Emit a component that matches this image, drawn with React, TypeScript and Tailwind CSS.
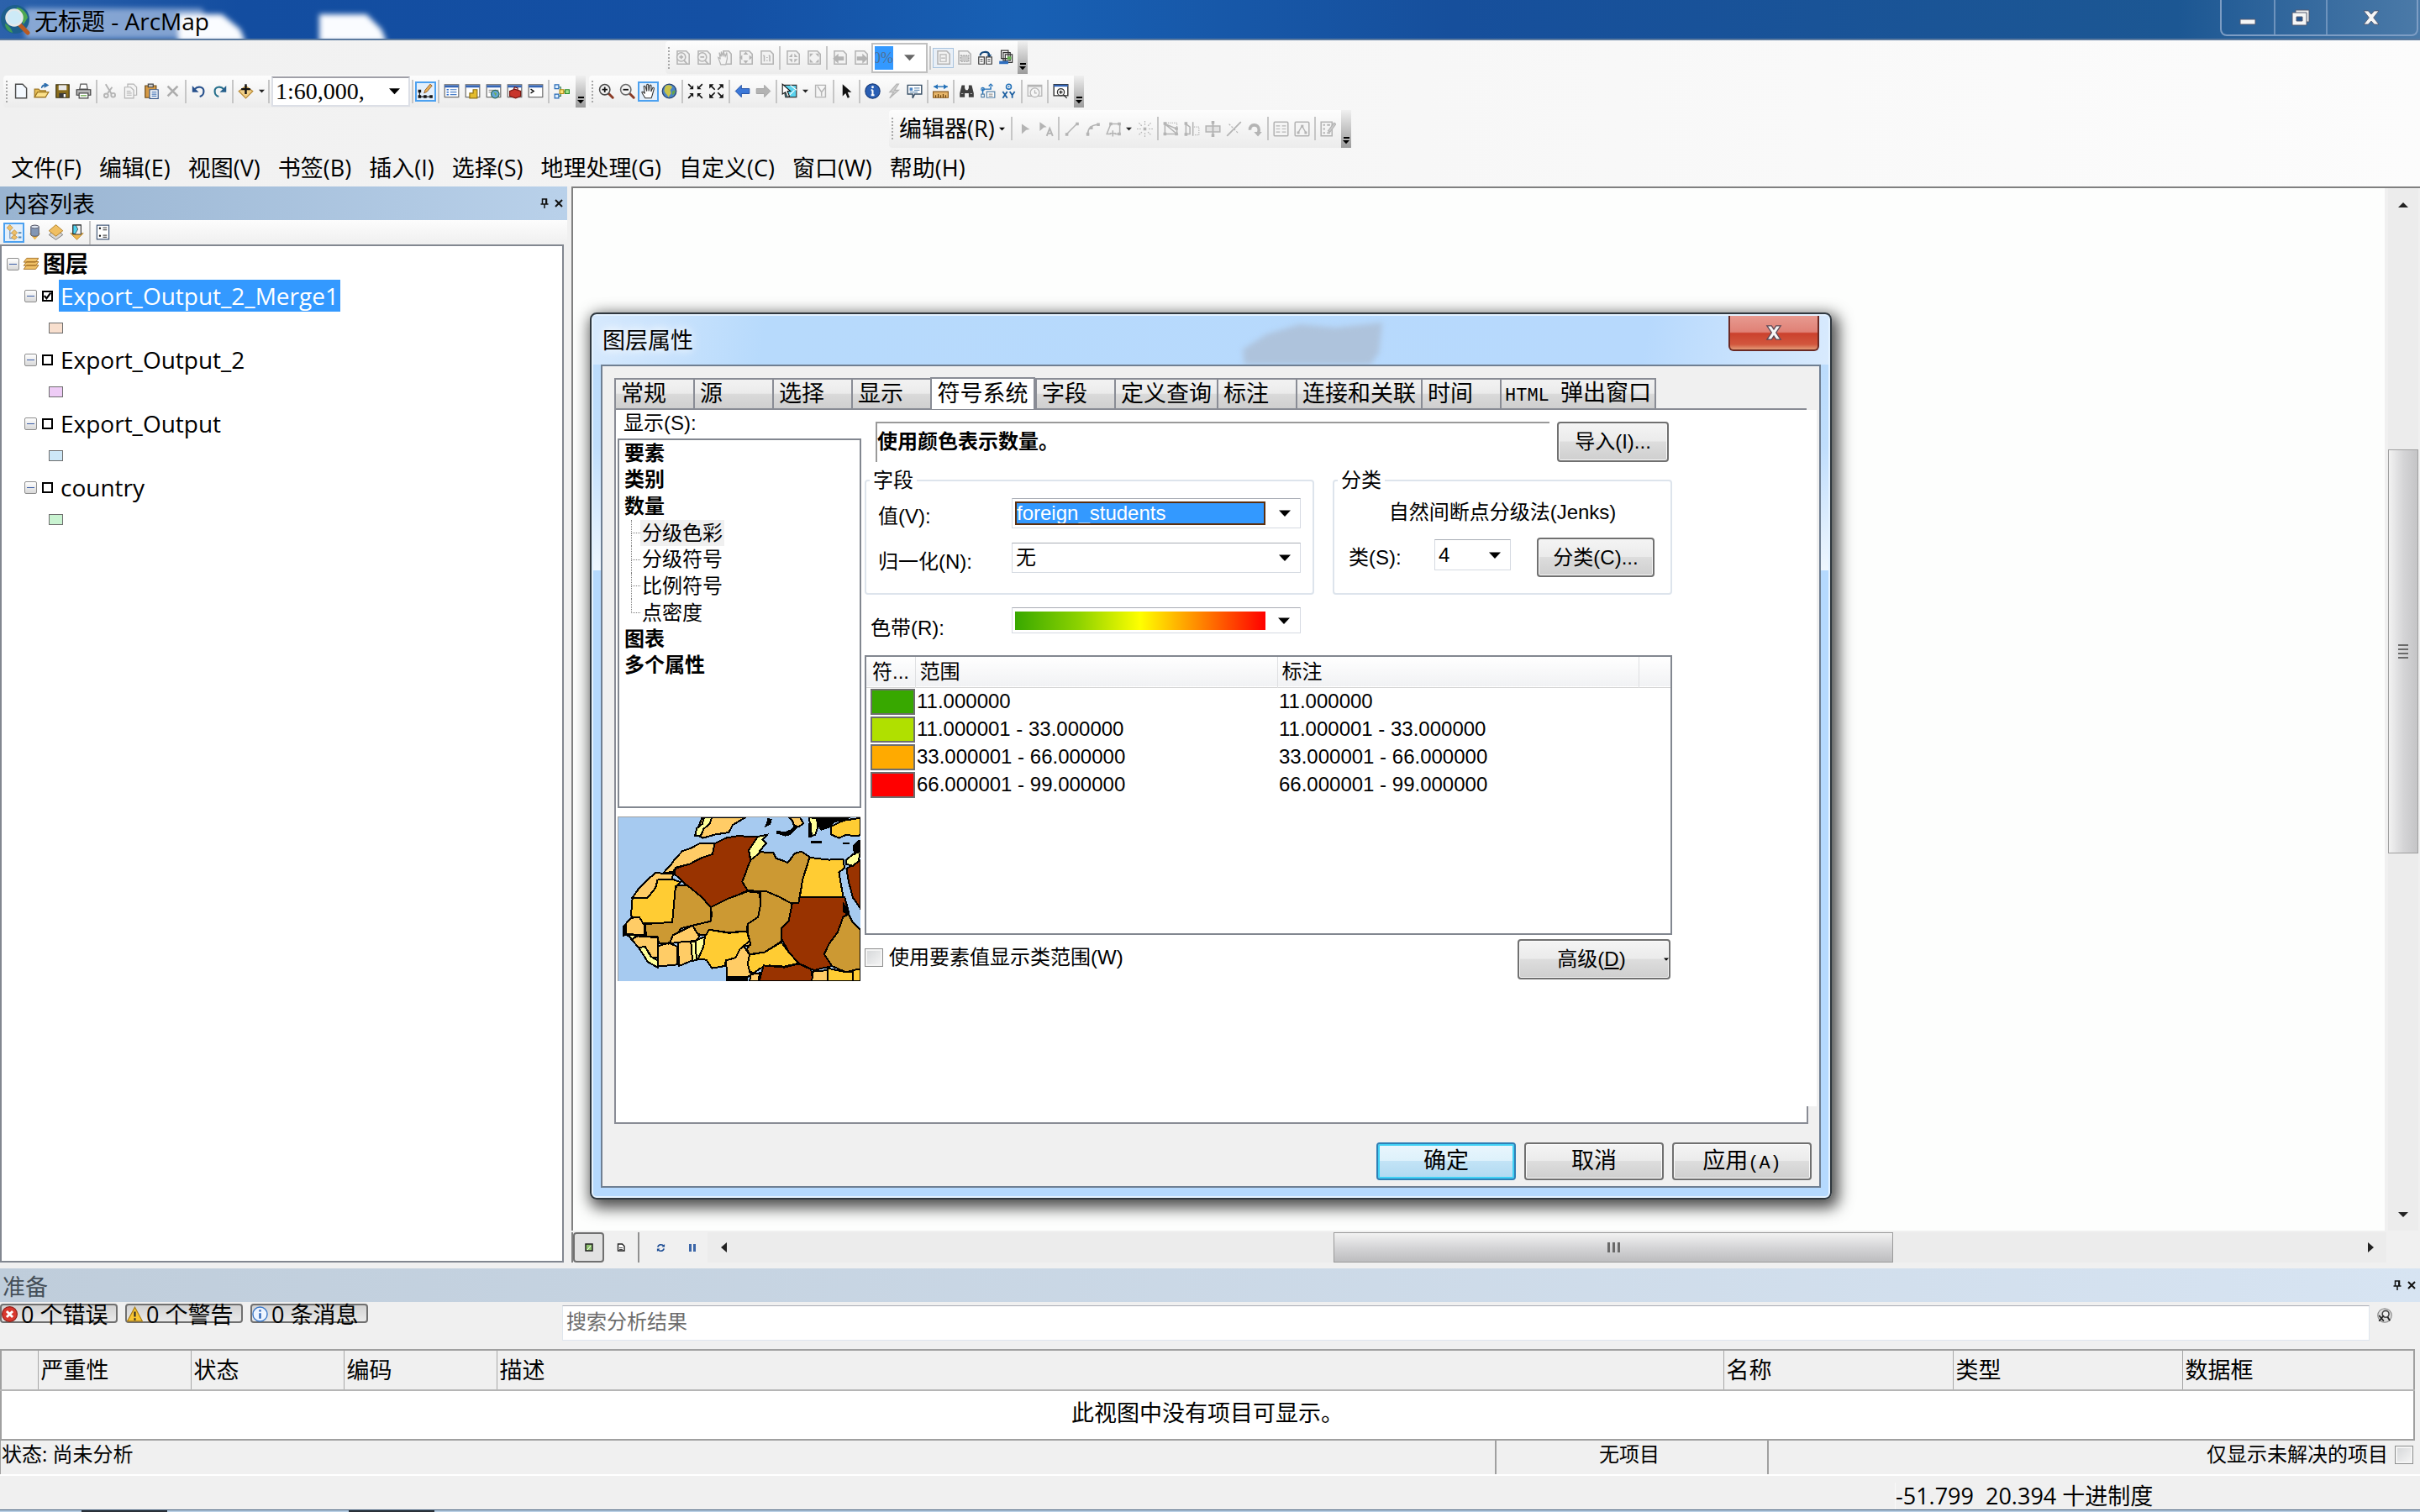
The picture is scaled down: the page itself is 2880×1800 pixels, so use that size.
import React from "react";

type Kids = { children?: React.ReactNode };

const UI = "font-['Open_Sans','Noto_Sans_CJK_SC',sans-serif]";
const SIM = "font-['Liberation_Sans','Noto_Sans_CJK_SC',sans-serif]";

/* ---------- icons (16 unit grid) ---------- */
const G = "#b4b4b4";

function Svg({ children, size = 20 }: Kids & { size?: number }) {
  return (
    <svg width={size} height={size} viewBox="0 0 16 16" fill="none" aria-hidden="true">
      {children}
    </svg>
  );
}

const lens = (c: string, handle: string) => (
  <>
    <path d="M10.5 10.5l4 4" stroke={handle} strokeWidth="2.4" strokeLinecap="round" />
    <circle cx="6.5" cy="6.5" r="5.2" fill="#f4f4f4" stroke={c} strokeWidth="1.3" />
  </>
);
const pageOutline = <path d="M2.5 1.5h9l3 3v10h-12z" fill="#f2f2f2" stroke={G} strokeWidth="1.3" />;
const windowFrame = (
  <>
    <rect x="1" y="1.5" width="14" height="12.5" fill="#fff" stroke="#6b6b6b" />
    <path d="M1 2h14v2.4H1z" fill="#3465b5" />
  </>
);

const icons: Record<string, React.ReactNode> = {
  newDoc: <path d="M3 1h7l4 4v10H3z" fill="#f4f9ff" stroke="#4a4a4a" strokeWidth="1.2" />,
  open: (
    <>
      <path d="M1 14V6h4l1.500 1.500H12V14z" fill="#e8bf55" stroke="#9c7520" />
      <path d="M1 14l3-5h11l-3 5z" fill="#fbe08a" stroke="#9c7520" />
      <path d="M8 5c0-3 2-3.500 4-3.500M11 0l3.500 2L11 4z" stroke="#2f6fae" fill="#2f6fae" />
    </>
  ),
  save: (
    <>
      <path d="M1.500 1.500h13v13h-13z" fill="#8a6d1c" stroke="#3d3312" />
      <path d="M4 2h8v5H4z" fill="#e9e9e9" />
      <path d="M4.500 10h7v4.500h-7z" fill="#3a3a3a" />
      <path d="M9 11h2v3H9z" fill="#fff" />
    </>
  ),
  print: (
    <>
      <path d="M5 1h6l1 5H4z" fill="#fff" stroke="#555" />
      <path d="M1 6.500h14V12H1z" fill="#b9b9b9" stroke="#3a3a3a" />
      <path d="M3.500 10h9v5h-9z" fill="#fff" stroke="#444" />
      <path d="M5 12.500h6" stroke="#5fa83c" />
    </>
  ),
  cut: (
    <g stroke={G} strokeWidth="1.6">
      <path d="M4 1l6 10M10.500 4L6 10" />
      <circle cx="4.500" cy="12.500" r="2" />
      <circle cx="11.500" cy="12" r="2" />
    </g>
  ),
  copy: (
    <g fill="#f4f4f4" stroke={G}>
      <path d="M5 1h6l3 3v8H5z" />
      <path d="M2 4h6l3 3v8H2zM4 8h4M4 10h5M4 12h5" />
    </g>
  ),
  paste: (
    <>
      <path d="M1.500 2.500h11v12h-11z" fill="#d69a45" stroke="#6b4a1a" />
      <path d="M4.500 1h5v3h-5z" fill="#ccc" stroke="#444" />
      <path d="M6 6.500h8.500v9H6z" fill="#fff" stroke="#3a5a8c" />
      <path d="M8 9h5M8 11h5M8 13h5" stroke="#4a78b8" />
    </>
  ),
  del: <path d="M3 3l10 10M13 3L3 13" stroke="#adadad" strokeWidth="2.2" />,
  undo: (
    <>
      <path d="M4 6c3-3.500 9-2.500 9 2 0 3-2 5-4 5.500" stroke="#27508c" strokeWidth="1.8" />
      <path d="M1.500 2.500v6.500h6.500z" fill="#27508c" />
    </>
  ),
  redo: (
    <>
      <path d="M12 6c-3-3.500-9-2.500-9 2 0 3 2 5 4 5.500" stroke="#27708c" strokeWidth="1.8" />
      <path d="M14.500 2.500v6.500H8z" fill="#27608c" />
    </>
  ),
  addData: (
    <>
      <path d="M8 3l7 5-7 7-7-7z" fill="#f2cf86" stroke="#b98a35" />
      <path d="M8 1v10M3.500 6h9" stroke="#111" strokeWidth="2" />
    </>
  ),
  editorTb: (
    <>
      <path d="M2 13.500h12M2 13V8" stroke="#222" />
      <path d="M.5 6.500h3v3h-3zM.5 12h3v3h-3zM6 12h3v3H6zM12 12h3v3h-3z" fill="#111" />
      <path d="M6.500 10l1-3 5-6 2 1.500-5 6z" fill="#e9b054" stroke="#87501a" strokeWidth=".7" />
    </>
  ),
  tocWin: (
    <>
      {windowFrame}
      <path d="M3 6.500h2M3 9h2M3 11.500h2" stroke="#2f6fd0" strokeWidth="1.300" />
      <path d="M6.500 6.500H13M6.500 9H13M6.500 11.500H13" stroke="#4a7fc8" />
    </>
  ),
  catalog: (
    <>
      {windowFrame}
      <path d="M5 10h3.500V6.500h4V15H5z" fill="#e4bc2c" stroke="#927310" />
    </>
  ),
  search: (
    <>
      {windowFrame}
      <path d="M3 7h10M3 9h6" stroke="#999" />
      <circle cx="9.500" cy="11" r="4" fill="#63a5d8" stroke="#2f6b51" />
      <path d="M8 9l3 1-1 3z" fill="#6fb04a" />
    </>
  ),
  toolbox: (
    <>
      {windowFrame}
      <path d="M3 8l5-2 6 2v5l-5 2-6-2z" fill="#c8352b" stroke="#7a1711" />
      <path d="M7 6l1-2 3 1v2" stroke="#7a1711" />
    </>
  ),
  python: (
    <>
      {windowFrame}
      <path d="M3 6l3 2-3 2" stroke="#111" strokeWidth="1.200" />
    </>
  ),
  model: (
    <>
      <path d="M4 4h3v9H4M7 8.500h5" stroke="#2f7c50" />
      <path d="M1 1.500h4v4H1zM1 11h4v4H1z" fill="#d9ecff" stroke="#2668b4" />
      <path d="M6 6.500h4v4H6z" fill="#ffe27a" stroke="#b08a10" />
      <path d="M11.500 6.500h4v4h-4z" fill="#a5e38c" stroke="#2b8a2b" />
    </>
  ),
  zoomIn: (
    <>
      {lens("#4a4a4a", "#8a3a25")}
      <path d="M6.500 3.800v5.400M3.800 6.500h5.400" stroke="#111" strokeWidth="1.500" />
    </>
  ),
  zoomOut: (
    <>
      {lens("#6a6a6a", "#8a3a25")}
      <path d="M3.800 6.500h5.400" stroke="#111" strokeWidth="1.500" />
    </>
  ),
  hand: (
    <path
      d="M5 15c-1-2-3-4-3.500-6 1-1 2 0 3 1.500L3.500 3c1-.8 1.500 0 1.800 1L6.500 8V1.500c1-1 1.700 0 1.700 1L8.500 8l1-6c1.200-.7 1.600.2 1.500 1.300L10.800 8.500l1.700-4c1.200-.5 1.500.5 1.200 1.500L12 12l-1 3z"
      fill="#fff"
      stroke="#333"
      strokeWidth=".9"
    />
  ),
  globe: (
    <>
      <circle cx="8" cy="8" r="7" fill="#4a84c4" stroke="#24406e" />
      <path d="M4 3c3-2 6-1 7 1l-2 3 1 3-3 4c-1-3-4-4-4-7z" fill="#c9c34a" />
      <path d="M11 8l3-1c0 3-1 4-3 5z" fill="#63a548" />
    </>
  ),
  fixIn: (
    <g stroke="#111" strokeWidth="1.400" fill="#111">
      <path d="M1 1l3 3M15 1l-3 3M1 15l3-3M15 15l-3-3" />
      <path d="M6 2v4H2zM10 2v4h4zM6 14v-4H2zM10 14v-4h4z" strokeWidth="0" />
    </g>
  ),
  fixOut: (
    <g stroke="#111" strokeWidth="1.400" fill="#111">
      <path d="M3 3l3.500 3.500M13 3L9.500 6.500M3 13l3.500-3.500M13 13L9.500 9.500" />
      <path d="M1 1h4.500L1 5.500zM15 1h-4.500L15 5.500zM1 15h4.500L1 10.500zM15 15h-4.500l4.500-4.500z" strokeWidth="0" />
    </g>
  ),
  back: <path d="M1 8l6-6v3.500h8v5H7V14z" fill="#3c78d8" stroke="#1f4ea3" strokeWidth=".8" />,
  fwd: <path d="M15 8L9 2v3.500H1v5h8V14z" fill="#b3b3b3" stroke="#a2a2a2" strokeWidth=".8" />,
  selFeat: (
    <>
      <path d="M2 2h13v12H4z" fill="#5ad3ee" stroke="#333" />
      <path d="M9 2l6 5M6 14l7-7" stroke="#fff" />
      <path d="M1 1v10l3-2 2 5 2-1-2-5h3z" fill="#fff" stroke="#111" strokeWidth=".9" />
    </>
  ),
  clearSel: <path d="M3 2h10v12H3zM5 3l4 6 4-5M9 9v4" fill="#f4f4f4" stroke={G} strokeWidth="1.200" />,
  pointer: <path d="M4 1v12l3-3 2 5 2-1-2-5h4z" fill="#111" />,
  identify: (
    <>
      <circle cx="8" cy="8" r="7.300" fill="#2a5fb4" stroke="#183c7c" />
      <path d="M8 7v5M6.500 7H8M6.500 12h3.200" stroke="#fff" strokeWidth="1.700" />
      <circle cx="8" cy="4" r="1.200" fill="#fff" />
    </>
  ),
  bolt: <path d="M11 1L4 9h4l-4 6 9-8H9l4-6z" fill="#d0d0d0" stroke={G} />,
  popup: (
    <>
      <path d="M1 2h14v9H8l-2 4v-4H1z" fill="#fff" stroke="#3a5168" strokeWidth="1.200" />
      <path d="M3 4.500h3v3H3z" fill="#4a84c4" />
      <path d="M7.500 5H13M7.500 7H13M3 9h8" stroke="#6d93b8" />
    </>
  ),
  measure: (
    <>
      <path d="M1 3.500h14" stroke="#2270b8" strokeWidth="1.200" />
      <path d="M5 1v5L1 3.500zM11 1v5l4-2.500z" fill="#2270b8" />
      <path d="M.5 8.500h15v6H.5z" fill="#e6b56a" stroke="#8a5a1c" />
      <path d="M3 14.500V12M5.500 14.500V11M8 14.500V12M10.500 14.500V11M13 14.500V12" stroke="#6b430e" />
    </>
  ),
  find: (
    <>
      <path d="M3 2h3v3l1 2h2l1-2V2h3l2 8v4h-5v-4H6v4H1v-4z" fill="#3f3f3f" />
      <path d="M2.500 10.500h2M11.500 10.500h2" stroke="#aaa" />
    </>
  ),
  route: (
    <>
      <path d="M3 14V6h8V3M9 3l2-2 2 2" stroke="#2270b8" strokeWidth="1.200" />
      <circle cx="3" cy="6" r="1.500" stroke="#2270b8" />
      <path d="M7 8.500h8v6H7zM1.500 11h3v3h-3z" fill="#fff" stroke="#5481a8" />
      <path d="M9 11h4M9 13h4" stroke="#999" />
    </>
  ),
  xy: (
    <>
      <circle cx="8" cy="3.500" r="2.500" stroke="#2270b8" strokeWidth="1.300" />
      <circle cx="8" cy="3.500" r=".8" fill="#2270b8" />
      <path d="M2 8.500l4.500 6.500M6.500 8.500L2 15M9 8.500l2.500 3.500L14 8.500M11.500 12v3" stroke="#1d5fa0" strokeWidth="1.500" />
    </>
  ),
  time: (
    <g stroke={G}>
      <path d="M1 2h14v11H1z" fill="#f1f1f1" />
      <path d="M1 3h14" strokeWidth="1.500" />
      <circle cx="8" cy="9.500" r="4.500" fill="#f6f6f6" />
      <path d="M8 7v3h2" />
    </g>
  ),
  viewer: (
    <>
      <path d="M1 1.500h14v11H1z" fill="#fff" stroke="#333" strokeWidth="1.200" />
      <path d="M1 2.500h14" stroke="#3465b5" strokeWidth="2" />
      <circle cx="8" cy="9" r="3.500" fill="#eee" stroke="#333" />
      <path d="M8 7.300v3.400M6.300 9h3.400M10.500 11.500l3.500 3.500" stroke="#222" />
    </>
  ),
  lZoomIn: (
    <>
      {pageOutline}
      <circle cx="6.500" cy="7.500" r="4.300" fill="#f0f0f0" stroke={G} strokeWidth="1.300" />
      <path d="M6.500 5.500v4M4.500 7.500h4M9.500 11l3 3.500" stroke={G} strokeWidth="1.500" />
    </>
  ),
  lZoomOut: (
    <>
      {pageOutline}
      <circle cx="6.500" cy="7.500" r="4.300" fill="#f0f0f0" stroke={G} strokeWidth="1.300" />
      <path d="M4.500 7.500h4M9.500 11l3 3.500" stroke={G} strokeWidth="1.500" />
    </>
  ),
  lPan: (
    <>
      <path d="M6 1.500h6l2.500 3v10H8" fill="#f2f2f2" stroke={G} strokeWidth="1.300" />
      <path d="M4 15L1.500 8l2 1-1-6 2 4V2l2 5V1.500L8.500 7l1.500-4 .5 6L9 15z" fill="#f4f4f4" stroke={G} />
    </>
  ),
  lFull: (
    <>
      {pageOutline}
      <path d="M8 2l2.500 3h-5zM8 14l2.500-3h-5zM1.500 8l3-2.500v5zM14.500 8l-3-2.500v5z" fill={G} />
    </>
  ),
  l11: (
    <>
      {pageOutline}
      <path d="M5.500 6v6M4.500 6.500l1-.8M11 6v6M10 6.500l1-.8M8.300 7.500v1M8.300 10.500v1" stroke={G} strokeWidth="1.300" />
    </>
  ),
  lFixIn: (
    <>
      {pageOutline}
      <path d="M7.500 4v3.500H4zM9.500 4v3.500H13zM7.500 13V9.500H4zM9.500 13V9.500H13z" fill={G} />
    </>
  ),
  lFixOut: (
    <>
      {pageOutline}
      <path d="M4 4h3.500L4 7.500zM13 4H9.500L13 7.500zM4 13h3.500L4 9.500zM13 13H9.500L13 9.500z" fill={G} />
    </>
  ),
  lBack: (
    <>
      {pageOutline}
      <path d="M1 9l5.500-5v3H12v4H6.500v3z" fill={G} />
    </>
  ),
  lFwd: (
    <>
      {pageOutline}
      <path d="M15 9L9.500 4v3H4v4h5.500v3z" fill={G} />
    </>
  ),
  draft: (
    <>
      {pageOutline}
      <path d="M5 5h6v7H5zM6 8.500h4" stroke={G} />
    </>
  ),
  focus: (
    <>
      {pageOutline}
      <path d="M4.500 6h8v6h-8z" fill="#ccc" stroke="#999" strokeDasharray="1.500 1" />
    </>
  ),
  swapPages: (
    <>
      <path d="M3 6c0-4 8-5 9-1" stroke="#174a7c" strokeWidth="1.800" />
      <path d="M9.500 5h5L12 8z" fill="#174a7c" />
      <path d="M1.500 7.500H7v7H1.500zM9 7.500h5.500v7H9z" fill="#fff" stroke="#333" />
      <path d="M3 10h2.500M3 12h2.500M10.500 10H13M10.500 12H13" stroke="#555" />
    </>
  ),
  ddp: (
    <>
      <path d="M3 1h7v8H3zM5 3h7v8H5zM7 5h7v8H7z" fill="#fff" stroke="#333" />
      <path d="M9 7h4v3H9z" fill="#5fae4a" />
      <path d="M1 11.500h9v3H1z" fill="#2f6fc0" />
    </>
  ),
  edPtr: <path d="M5 3l8 5.500-3.500.5L5 13z" fill={G} />,
  edPtrA: (
    <>
      <path d="M2 1l7 5-3 .5L2 10z" fill={G} />
      <path d="M9 15l3-7.500 3 7.500M10 12.500h4" stroke={G} strokeWidth="1.600" />
    </>
  ),
  line: (
    <>
      <path d="M3 13L13 3" stroke={G} strokeWidth="1.300" />
      <path d="M1.500 12h3v3h-3zM12 1.500h3v3h-3z" fill={G} />
    </>
  ),
  arc: (
    <>
      <path d="M3 13c0-6 4-9 10-9.500" stroke={G} strokeWidth="1.300" />
      <path d="M1.500 11.500h3V15h-3zM5 5.500h3v3H5zM12 2h3v3h-3z" fill={G} />
    </>
  ),
  trace: (
    <>
      <path d="M5 3h9v10H9M5 3L1 13h4M7 9.500v6M4 12.500h6" stroke={G} strokeWidth="1.300" />
      <path d="M3.500 1.500h3v3h-3zM12 1.500h3v3h-3zM12 11.500h3v3h-3z" fill={G} />
    </>
  ),
  point: (
    <>
      <path d="M6.500 6.500h3v3h-3z" fill={G} />
      <path d="M8 0v4M8 12v4M0 8h4M12 8h4M2 2l3 3M11 11l3 3M14 2l-3 3M5 11l-3 3" stroke={G} strokeDasharray="1.500 1" />
    </>
  ),
  vert: (
    <>
      <path d="M2 3v10h12zM2 3l12 5v5" stroke={G} strokeWidth="1.300" />
      <path d="M.5 1h3v3h-3zM.5 11.500h3v3h-3zM12 6h3v3h-3zM12 11.500h3v3h-3z" fill={G} />
      <path d="M3 2h11v5" stroke={G} strokeDasharray="1 1" />
    </>
  ),
  reshape: (
    <>
      <path d="M2 3v10M2 3l4 3v7H2M9 1v14" stroke={G} strokeWidth="1.300" />
      <path d="M.5 1h3v3h-3zM.5 12h3v3h-3z" fill={G} />
      <path d="M10 6h5v8h-5" stroke={G} strokeDasharray="1 1" />
    </>
  ),
  cutPoly: (
    <>
      <path d="M1 5h14v6H1z" fill="#e2e2e2" stroke={G} strokeWidth="1.300" />
      <path d="M8 1v14" stroke={G} strokeWidth="1.600" />
      <path d="M6.500 0h3v3h-3zM6.500 13h3v3h-3z" fill={G} />
    </>
  ),
  split: (
    <>
      <path d="M1 15L15 1" stroke={G} strokeWidth="1.500" />
      <path d="M3 3l10 10" stroke={G} strokeDasharray="2 1.500" />
    </>
  ),
  rotate: (
    <>
      <path d="M3 9c-1-6 9-7 9 0 0 1 0 2-1 3" stroke={G} strokeWidth="3" />
      <path d="M7 11h8l-4 4.500z" fill={G} />
    </>
  ),
  attrs: (
    <>
      <rect x="1" y="1" width="14" height="14" rx="1" fill="#f4f4f4" stroke={G} strokeWidth="1.300" />
      <path d="M3 5h4M3 8h4M3 11h4M9 5h4M9 8h4M9 11h4" stroke={G} />
    </>
  ),
  sketch: (
    <>
      <rect x="1" y="1" width="14" height="14" rx="1" fill="#f4f4f4" stroke={G} strokeWidth="1.300" />
      <path d="M4 12l4-7 4 7" stroke={G} strokeWidth="1.200" />
      <path d="M3 10.500h2.500V13H3zM7 4h2.500v2.500H7zM10.500 10.500H13V13h-2.500z" fill={G} />
    </>
  ),
  create: (
    <>
      <path d="M1 1h11v14H1z" fill="#f4f4f4" stroke={G} strokeWidth="1.300" />
      <path d="M3 4h2M3 8h2M3 12h2M7 4h3M7 12h3" stroke={G} strokeWidth="1.500" />
      <path d="M8 10l6-8 2 1-6 8z" fill="#ccc" stroke={G} />
    </>
  ),
  listDraw: (
    <>
      <path d="M4 5v9h3M4 9h3" stroke="#7a98bb" />
      <path d="M4 .500l3 3-3 3-3-3zM8.500 5.500l3 3-3 3-3-3zM8.500 10.500l3 2.500-3 2.500-3-2.500z" fill="#efc06a" stroke="#b9883a" strokeWidth=".6" />
      <path d="M12.500 8.500h3M12.500 13h3" stroke="#4f86b5" strokeWidth="1.600" />
    </>
  ),
  listSource: (
    <>
      <path d="M2.500 9h11L8 15.500z" fill="#efb84f" />
      <path d="M4 2.500c0-2 8-2 8 0v8c0 2-8 2-8 0z" fill="#8296b5" stroke="#445" strokeWidth=".7" />
      <ellipse cx="8" cy="2.500" rx="4" ry="1.500" fill="#dfe7f2" stroke="#445" strokeWidth=".6" />
    </>
  ),
  listVis: (
    <>
      <path d="M8 5l7 5.500-7 5-7-5z" fill="#d6d6d6" stroke="#777" strokeWidth=".8" />
      <path d="M8 .500l7 6-7 5.500-7-5.500z" fill="#f0bf62" stroke="#b07f28" strokeWidth=".8" />
    </>
  ),
  listSel: (
    <>
      <path d="M1.500 9h13L8 15.500z" fill="#efb84f" stroke="#b07f28" strokeWidth=".6" />
      <path d="M4 .800h8v9H4z" fill="#4fd0ee" stroke="#222" />
      <path d="M7 1l2 4-3 5h6V1z" fill="#f4f4f4" stroke="#222" strokeWidth=".6" />
    </>
  ),
  options: (
    <>
      <path d="M2 1h12v14H2z" fill="#fff" stroke="#445a7a" />
      <circle cx="5" cy="4" r="1" fill="#111" />
      <circle cx="5" cy="11.500" r="1" fill="#111" />
      <path d="M8 3.500h4M8 5.500h4M8 11h4M8 13h4" stroke="#555" />
    </>
  ),
};

function Arrow({ size = 14, color = "#000" }: { size?: number; color?: string }) {
  return (
    <svg width={size} height={size} viewBox="0 0 14 14" aria-hidden="true" className="pointer-events-none">
      <path d="M0 3.500h14L7 11z" fill={color} />
    </svg>
  );
}

/* ---------- toolbars ---------- */
function Tool({ name, on, faint }: { name: string; on?: boolean; faint?: boolean }) {
  return (
    <button
      type="button"
      aria-label={name}
      className={
        "flex h-6 w-[25px] shrink-0 items-center justify-center " +
        (on ? (faint ? "border border-[#a9c4de] bg-[#e8eff7]" : "border-2 border-[#4ca1f0] bg-[#e3effb]") : "")
      }
    >
      <Svg size={19}>{icons[name]}</Svg>
    </button>
  );
}
const Sep = () => <span className="mx-[2px] h-7 w-[2px] shrink-0 bg-[#c6c6c6]" />;

function Items({ list }: { list: string[] }) {
  return (
    <>
      {list.map((n, i) => {
        if (n === "|") return <Sep key={i} />;
        if (n === "v") return <span key={i} className="flex w-3 justify-center"><Arrow size={7} color="#222" /></span>;
        if (n.startsWith("*")) return <Tool key={i} name={n.slice(1)} on />;
        if (n.startsWith("~")) return <Tool key={i} name={n.slice(1)} on faint />;
        return <Tool key={i} name={n} />;
      })}
    </>
  );
}

function Bar({ children, className = "" }: Kids & { className?: string }) {
  return (
    <div className={"flex shrink-0 items-center rounded bg-linear-to-b from-[#fdfdfd] to-[#ececec] " + className}>
      <span className="mx-[3px] h-[26px] border-l-2 border-dotted border-[#a8a8a8]" />
      {children}
      <span className="ml-auto flex h-full w-3 flex-col items-center justify-end bg-linear-to-b from-[#f0f0f0] to-[#9c9c9c] pb-[3px]">
        <span className="h-[2px] w-[7px] bg-black" />
        <Arrow size={8} />
      </span>
    </div>
  );
}

/* ---------- shared controls ---------- */
const btnFace =
  "border-[#707070] bg-[linear-gradient(#f4f4f4,#ebebeb_48%,#dddddd_50%,#cfcfcf)] shadow-[inset_0_0_0_1px_#fafafa]";

function DropDown({
  id,
  value,
  className = "",
  selected = false,
}: {
  id: string;
  value: string;
  className?: string;
  selected?: boolean;
}) {
  return (
    <span className={"relative flex border border-[#d5dae2] border-t-[#a9adb5] bg-white " + className}>
      <select
        id={id}
        defaultValue={value}
        className={
          "h-auto w-full appearance-none text-2xl leading-6 outline-none " +
          (selected
            ? "my-[3px] mr-[41px] ml-[3px] border-2 border-[#5a2f10] bg-[#3399ff] text-white"
            : "pl-[4px]")
        }
      >
        <option>{value}</option>
      </select>
      <span className="pointer-events-none absolute inset-y-0 right-[11px] flex items-center">
        <Arrow />
      </span>
    </span>
  );
}

function PinClose() {
  return (
    <span className="flex items-center gap-[7px]">
      <button type="button" aria-label="自动隐藏">
        <svg width="10" height="12" viewBox="0 0 10 12" fill="none" stroke="#111" strokeWidth="1.500">
          <path d="M2.500 1h5v6h-5zM.500 7h9M5 7v5M6.800 1v6" />
        </svg>
      </button>
      <button type="button" aria-label="关闭">
        <svg width="10" height="10" viewBox="0 0 10 10" stroke="#111" strokeWidth="2">
          <path d="M1 1l8 8M9 1L1 9" />
        </svg>
      </button>
    </span>
  );
}

/* ---------- table of contents ---------- */
const layers = [
  { name: "Export_Output_2_Merge1", color: "bg-[#f8dfce]", on: true },
  { name: "Export_Output_2", color: "bg-[#eeccf6]", on: false },
  { name: "Export_Output", color: "bg-[#cde7f7]", on: false },
  { name: "country", color: "bg-[#c9f3d1]", on: false },
];

function Collapse() {
  return (
    <button
      type="button"
      aria-label="折叠"
      className="flex size-[15px] shrink-0 items-center justify-center rounded-[2px] border border-[#8e8e8e] bg-linear-to-b from-white to-[#d8d8d8]"
    >
      <span className="h-px w-[9px] bg-[#3c5ea8]" />
    </button>
  );
}

function Contents() {
  return (
    <aside className="flex w-[675px] shrink-0 flex-col bg-[#f0f0f0]">
      <header className="flex h-10 items-center justify-between bg-linear-to-r from-[#99b4d1] to-[#b9d1ea] pr-[5px] pl-[5px]">
        <h2 className="pt-[2px] text-[27px] leading-9">内容列表</h2>
        <PinClose />
      </header>
      <div className="flex h-[29px] items-center bg-linear-to-b from-[#fdfdfd] to-[#efefef] pl-1">
        <Items list={["*listDraw", "listSource", "listVis", "listSel", "|", "options"]} />
      </div>
      <div className="mr-1 flex-1 border-2 border-[#828790] bg-white pt-[2px]">
        <div className="flex h-[38px] items-center pl-[6px]">
          <Collapse />
          <span className="ml-1">
            <svg width="19" height="19" viewBox="0 0 16 16">
              <path d="M4 9h12l-3 4H1zM4 5.500h12l-3 4H1zM4 2h12l-3 4H1z" fill="#f0c168" stroke="#a8742a" strokeWidth=".8" />
            </svg>
          </span>
          <span className="ml-[5px] text-[27px] leading-9 font-bold">图层</span>
        </div>
        {layers.map((l) => (
          <div key={l.name}>
            <div className="flex h-[38px] items-center pl-[27px]">
              <Collapse />
              <label className="flex items-center">
                <span className="relative ml-[6px] flex">
                  <input
                    type="checkbox"
                    defaultChecked={l.on}
                    className="peer size-[13px] appearance-none border-2 border-black bg-white"
                  />
                  <svg viewBox="0 0 12 12" className="absolute inset-0 hidden size-[13px] peer-checked:block">
                    <path d="M2.500 5.500l2.500 3 4.500-6" stroke="#000" strokeWidth="2" fill="none" />
                  </svg>
                </span>
                <span className={"ml-[7px] px-[2px] text-[28px] leading-[38px] " + (l.on ? "bg-[#3399ff] text-white" : "")}>
                  {l.name}
                </span>
              </label>
            </div>
            <div className="flex h-[38px] items-center pl-14">
              <span className={"h-[13px] w-[17px] border border-[#6e6e6e] " + l.color} />
            </div>
          </div>
        ))}
      </div>
    </aside>
  );
}

/* ---------- map window with scroll bars ---------- */
function MapArea() {
  const cap = "flex shrink-0 items-center justify-center";
  return (
    <section className="ml-[5px] flex min-w-0 flex-1 flex-col border-t-2 border-[#808080]">
      <div className="flex flex-1">
        <div className="flex-1 border-l-2 border-[#808080] bg-[#fdfefd]" />
        <div className="ml-1 flex w-9 flex-col bg-[#ececec]">
          <button type="button" aria-label="向上滚动" className={cap + " h-[38px]"}>
            <svg width="12" height="7" viewBox="0 0 12 7"><path d="M0 7l6-6 6 6z" fill="#222" /></svg>
          </button>
          <div className="flex-[274]" />
          <div className="flex flex-[481] flex-col items-center justify-center gap-[3px] border border-[#a0a0a0] bg-linear-to-r from-[#f2f2f2] via-[#d5d5d7] to-[#c4c4c6]">
            {[0, 1, 2, 3].map((i) => <span key={i} className="h-[2px] w-3 bg-[#6a6a6a]" />)}
          </div>
          <div className="flex-[412]" />
          <button type="button" aria-label="向下滚动" className={cap + " h-[38px]"}>
            <svg width="12" height="7" viewBox="0 0 12 7"><path d="M0 0l6 6 6-6z" fill="#222" /></svg>
          </button>
        </div>
        <div className="w-[2px]" />
      </div>
      <div className="mt-[2px] mr-10 flex h-9 border-l-2 border-[#808080]">
        <button type="button" aria-label="数据视图" className={cap + " w-[37px] rounded border-2 border-[#707070] bg-[#e2e2e2]"}>
          <svg width="10" height="10" viewBox="0 0 10 10"><path d="M1 1h8v8H1z" fill="#8fc46e" stroke="#222" strokeWidth="1.500" /><path d="M3 8l4-5" stroke="#fff" /></svg>
        </button>
        <button type="button" aria-label="布局视图" className={cap + " w-10"}>
          <svg width="10" height="10" viewBox="0 0 10 10"><path d="M1.500 1h5L9 3.500V9H1.500z" fill="#fff" stroke="#222" strokeWidth="1.400" /><path d="M3 5.500h4M3 7.500h4" stroke="#444" /></svg>
        </button>
        <span className="h-full w-[2px] bg-[#909090]" />
        <button type="button" aria-label="刷新" className={cap + " ml-[5px] w-10"}>
          <svg width="11" height="11" viewBox="0 0 12 12" fill="none" stroke="#1c4c94" strokeWidth="1.800"><path d="M2 5c1-4 6-4 8-1M10 7c-1 4-6 4-8 1" /><path d="M11 1v4H7zM1 11V7h4z" fill="#1c4c94" strokeWidth="0" /></svg>
        </button>
        <button type="button" aria-label="暂停绘制" className={cap + " w-9"}>
          <svg width="8" height="9" viewBox="0 0 8 9"><path d="M0 0h3v9H0zM5 0h3v9H5z" fill="#3c66a8" /></svg>
        </button>
        <div className="flex flex-1 bg-[#ececec]">
          <button type="button" aria-label="向左滚动" className={cap + " w-[38px]"}>
            <svg width="7" height="12" viewBox="0 0 7 12"><path d="M7 0v12L0 6z" fill="#222" /></svg>
          </button>
          <div className="flex-[707]" />
          <div className="flex flex-[664] items-center justify-center gap-[3px] border border-[#9a9a9a] bg-linear-to-b from-[#f2f2f2] via-[#d5d5d7] to-[#bdbdbf]">
            {[0, 1, 2].map((i) => <span key={i} className="h-3 w-[3px] bg-[#6a6a6a]" />)}
          </div>
          <div className="flex-[549]" />
          <button type="button" aria-label="向右滚动" className={cap + " w-[38px]"}>
            <svg width="7" height="12" viewBox="0 0 7 12"><path d="M0 0v12l7-6z" fill="#222" /></svg>
          </button>
        </div>
      </div>
    </section>
  );
}

/* ---------- layer properties dialog ---------- */
function AfricaPreview() {
  const dark = "#993300";
  const mid = "#cc9933";
  const gold = "#ffcc33";
  const peach = "#ffcc66";
  const pale = "#ffff99";
  const shapes: [string, string][] = [
    [peach, "345,38 320,100 348,112 390,100 440,92 455,65 500,38"],
    [pale, "352,38 345,62 325,78 320,104 340,104 350,80 372,60 380,38"],
    [gold, "808,70 850,50 912,40 912,102 890,105 862,100 835,112 808,100"],
    [peach, "335,132 390,132 382,170 345,182 300,205 250,218 242,232 205,238 235,205 245,190 275,158 305,148"],
    [peach, "178,237 242,240 235,260 185,262 178,290 150,325 95,325 120,290 150,260"],
    [dark, "390,132 430,112 470,105 545,107 530,130 512,155 518,195 500,245 488,268 508,300 440,330 395,355 375,360 345,330 300,290 245,240 250,220 300,205 345,182 382,170"],
    [pale, "545,107 578,100 562,118 575,130 550,160 548,172 520,195 512,155 530,128"],
    [mid, "520,190 555,162 600,165 610,185 640,195 650,200 660,190 675,168 700,160 730,180 705,260 690,345 660,345 620,322 575,303 508,300 488,268 500,240 512,205"],
    [gold, "730,182 800,190 850,187 855,220 835,235 850,322 695,322 705,260"],
    [gold, "185,262 240,260 268,270 250,285 246,350 238,413 175,418 135,418 90,390 95,328 150,325 178,290"],
    [mid, "255,280 290,280 345,325 375,360 378,410 310,425 270,435 228,490 190,490 185,465 145,465 140,420 238,413 248,300"],
    [mid, "375,360 440,328 508,303 550,308 555,345 545,395 508,420 505,445 440,450 370,440 360,460 320,455 310,425 375,410 380,385"],
    [mid, "555,303 575,303 620,322 668,348 655,408 628,440 628,482 570,520 515,528 505,510 518,490 508,450 508,420 545,395 555,345"],
    [dark, "695,322 855,322 870,378 850,395 830,450 800,490 782,528 810,570 745,585 690,560 655,520 628,470 628,435 655,410 668,345 690,345"],
    [mid, "870,385 885,415 912,440 912,580 860,592 810,570 782,528 800,490 830,450 850,395"],
    [dark, "862,222 890,205 912,190 912,365 885,325 870,270"],
    [pale, "862,190 885,170 912,160 905,195 885,212 862,206"],
    [peach, "90,398 120,395 138,425 138,460 70,455 62,430"],
    [peach, "92,475 115,463 185,468 185,540 165,540 140,500 118,505"],
    [pale, "118,505 140,500 160,535 185,550 185,575 150,555"],
    [pale, "75,458 110,460 95,475"],
    [peach, "185,500 225,487 255,500 255,565 185,572"],
    [peach, "228,490 240,460 310,425 335,465 320,480 258,485"],
    [peach, "258,485 305,482 310,550 262,570"],
    [pale, "305,485 322,480 325,548 310,552"],
    [pale, "322,478 355,465 350,500 330,545 324,545"],
    [gold, "355,465 370,440 440,452 505,445 515,480 480,510 465,540 430,550 425,570 380,578 360,548 330,545 350,500"],
    [peach, "515,480 518,495 495,500 515,530 510,570 520,600 505,612 435,612 430,550 465,540 480,510"],
    [gold, "515,530 570,520 628,485 655,520 690,560 640,572 585,568 550,580 530,595 515,590 508,560"],
    [dark, "565,568 640,575 690,562 735,582 742,624 550,624 556,600"],
    [peach, "520,600 550,595 548,624 515,624"],
    [peach, "742,590 795,585 795,624 738,624"],
    [gold, "795,578 860,592 885,590 885,624 795,624"],
    [gold, "885,585 912,580 912,624 885,624"],
    [peach, "655,38 695,38 708,60 690,72 675,70 668,50"],
    [pale, "728,38 755,42 760,70 750,100 738,105 732,70"],
  ];
  return (
    <svg
      viewBox="45 38 867 586"
      preserveAspectRatio="none"
      shapeRendering="crispEdges"
      className="h-[196px] w-[289px] border-t border-l border-[#a0a0a0]"
      role="img"
      aria-label="符号预览"
    >
      <path d="M45 38h867v586H45z" fill="#a6caf0" />
      {shapes.map(([c, p]) => (
        <polygon key={p} points={p} fill={c} stroke="#000" strokeWidth="6" />
      ))}
      <path
        d="M760 38h120l-30 12-30 6-20 20-30 10-15-25zM735 122h38v10h-38zM850 127h24v8h-24zM610 85l30 5 25-10 15-15 12 6-30 30-20 5-32-10zM580 40l15 5-5 18-22 12 8-20zM885 140l20-20h8v40l-25 15zM60 425l15-5v40l-15 5zM430 605h80v18h-80zM850 340l22 35-12 10-12-10zM724 60h12v50h-12z"
        fill="#000"
      />
    </svg>
  );
}

const tabs = ["常规", "源", "选择", "显示", "符号系统", "字段", "定义查询", "标注", "连接和关联", "时间", "HTML 弹出窗口"];

function TabText({ t }: { t: string }) {
  if (!t.startsWith("HTML")) return <>{t}</>;
  return (
    <>
      <span className="font-['Liberation_Mono',monospace] text-[22px]">HTML&nbsp;</span>
      {t.slice(5)}
    </>
  );
}

const ranges = [
  ["bg-[#38a800]", "11.000000"],
  ["bg-[#b0e000]", "11.000001 - 33.000000"],
  ["bg-[#ffaa00]", "33.000001 - 66.000000"],
  ["bg-[#ff0000]", "66.000001 - 99.000000"],
];

function Head({ children }: Kids) {
  return <li className="flex items-center pl-[6px] font-bold">{children}</li>;
}
function Leaf({ children, on, last }: Kids & { on?: boolean; last?: boolean }) {
  return (
    <li className="flex items-center pl-[14px]">
      <span className="flex h-full w-[11px] flex-col">
        <span className="flex-1 border-b border-l border-dotted border-[#808080]" />
        <span className={"flex-1 " + (last ? "" : "border-l border-dotted border-[#808080]")} />
      </span>
      <span className={"px-[2px] leading-[31px] " + (on ? "bg-[#f0f0f0]" : "")}>{children}</span>
    </li>
  );
}

function LayerProperties() {
  return (
    <div
      role="dialog"
      aria-label="图层属性"
      className={
        "absolute top-[372px] left-[702px] flex w-[1478px] flex-col rounded-lg border-2 border-[#30383f] bg-[linear-gradient(#b8dafc,#c0defc_15%,#eef6fe_29%,#b5d9fe_29%)] px-[11px] pb-3 text-2xl shadow-[4px_6px_18px_4px_rgba(0,0,0,0.7),inset_0_0_0_2px_#e4f2ff] " +
        SIM
      }
    >
      <header className="relative -mx-[9px] mt-[2px] flex h-[58px] items-center overflow-hidden bg-[linear-gradient(100deg,#d6e9fd,#b7dafc_14%,#b7d9fd_85%,#d8eafd)] pl-[11px]">
        <h2 className="pt-[2px] text-[27px] leading-9 text-black [text-shadow:0_0_10px_#fff,0_0_16px_#fff]">图层属性</h2>
        <svg width="180" height="52" viewBox="0 0 180 52" className="absolute right-[521px] bottom-0 blur-[3px]" aria-hidden="true">
          <path d="M4 34l28-18 40-12 42 4 56-6-4 36-10 14H6z" fill="#aec3dc" />
        </svg>
        <button
          type="button"
          aria-label="关闭"
          className="absolute top-0 right-[11px] flex h-[42px] w-[108px] items-center justify-center rounded-b-md border-2 border-t-0 border-[#6b2a24] bg-[linear-gradient(#e79a90,#e08176_48%,#cb412d_52%,#d2573e_85%,#e39a76)]"
        >
          <svg width="22" height="18" viewBox="0 0 22 20">
            <path d="M2 1h6l3 4.500L14 1h6l-6 9 6 9h-6l-3-4.500L8 19H2l6-9z" fill="#f6f6f6" stroke="#5e4a56" strokeWidth="1.500" />
          </svg>
        </button>
      </header>

      <div className="flex flex-col border-2 border-[#6f7f92] bg-[#f0f0f0] pt-[13px] pb-[7px] pl-[14px]">
        <div role="tablist" className="relative flex items-end text-[27px] leading-8">
          {tabs.map((t) => {
            const sel = t === "符号系统";
            return (
              <button
                key={t}
                type="button"
                role="tab"
                aria-selected={sel}
                className={
                  sel
                    ? "h-[38px] w-[125px] border-2 border-b-0 border-[#898c95] bg-white text-center"
                    : "mb-[1px] h-9 min-w-[94px] border-2 border-r-0 border-b-0 border-[#898c95] bg-[linear-gradient(#f2f2f2,#ebebeb_48%,#dadada_50%,#cfcfcf)] px-[6px] text-left last:border-r-2 last:px-1"
                }
              >
                <TabText t={t} />
              </button>
            );
          })}
        </div>

        <div role="tabpanel" className="-mt-[1px] flex">
          <div className="flex h-[852px] flex-1 items-start border-t-2 border-b-2 border-l-2 border-[#898c95] bg-white">
            <div className="ml-[2px] flex w-[290px] flex-col">
              <span className="h-[34px] pl-[7px] leading-8">显示(S):</span>
              <ul className="grid h-[440px] grid-rows-[repeat(9,minmax(0,1fr))] border-2 border-[#828790] bg-white pb-[152px]">
                <Head>要素</Head>
                <Head>类别</Head>
                <Head>数量</Head>
                <Leaf on>分级色彩</Leaf>
                <Leaf>分级符号</Leaf>
                <Leaf>比例符号</Leaf>
                <Leaf last>点密度</Leaf>
                <Head>图表</Head>
                <Head>多个属性</Head>
              </ul>
              <div className="mt-[10px]">
                <AfricaPreview />
              </div>
            </div>

            <div className="ml-1 flex w-[961px] flex-col pt-[14px]">
              <div className="flex h-12">
                <p className="ml-[13px] flex-1 border-t-2 border-l-2 border-[#9a9a9a] pt-[6px] font-bold leading-8">
                  使用颜色表示数量。
                </p>
                <button type="button" className={"mr-1 ml-[9px] w-[133px] rounded border-2 " + btnFace}>
                  导入(I)...
                </button>
              </div>

              <div className="mt-[10px] flex gap-[22px]">
                <fieldset className="h-[148px] w-[535px] rounded border-2 border-[#dde4ec]">
                  <legend className="ml-1 px-1 leading-6">字段</legend>
                  <div className="mt-[9px] flex items-center pl-[14px]">
                    <label htmlFor="value-field" className="w-[159px] pt-2 leading-7">值(V):</label>
                    <DropDown id="value-field" value="foreign_students" selected className="h-9 w-[344px]" />
                  </div>
                  <div className="mt-4 flex items-center pl-[14px]">
                    <label htmlFor="normalization" className="w-[159px] pt-[10px] leading-7">归一化(N):</label>
                    <DropDown id="normalization" value="无" className="h-9 w-[344px]" />
                  </div>
                </fieldset>
                <fieldset className="h-[148px] flex-1 rounded border-2 border-[#dde4ec]">
                  <legend className="ml-1 px-1 leading-6">分类</legend>
                  <p className="mt-[10px] text-center leading-8">自然间断点分级法(Jenks)</p>
                  <div className="mt-[14px] flex h-[47px] pl-[17px]">
                    <label htmlFor="classes" className="w-[102px] pt-2 leading-8">类(S):</label>
                    <DropDown id="classes" value="4" className="mt-[2px] h-[37px] w-[91px]" />
                    <button type="button" className={"ml-[31px] w-[140px] rounded border-2 " + btnFace}>
                      分类(C)...
                    </button>
                  </div>
                </fieldset>
              </div>

              <div className="mt-[15px] flex h-[38px] items-start pl-[7px]">
                <span className="w-[168px] pt-[11px] leading-7">色带(R):</span>
                <button
                  type="button"
                  aria-label="色带"
                  className="flex h-[31px] w-[344px] items-center border border-[#d5dae2] border-t-[#a9adb5] bg-white pr-3 pl-[3px]"
                >
                  <span className="h-[22px] flex-1 bg-[linear-gradient(90deg,#38a800,#8bd100_25%,#ffff00_50%,#ff8000_75%,#ff0000)]" />
                  <span className="ml-[15px]">
                    <Arrow />
                  </span>
                </button>
              </div>

              <div className="mt-[19px] h-[333px] border-2 border-[#828790] bg-white">
                <table className="w-full table-fixed border-collapse text-left">
                  <colgroup>
                    <col className="w-[58px]" />
                    <col className="w-[431px]" />
                    <col className="w-[430px]" />
                    <col />
                  </colgroup>
                  <thead>
                    <tr className="h-9 border-b border-[#d5d5d5] bg-linear-to-b from-white to-[#f1f2f4] leading-8">
                      <th className="border-r border-[#dfe0e2] pl-[7px] font-normal">符...</th>
                      <th className="border-r border-[#dfe0e2] pl-[5px] font-normal">范围</th>
                      <th className="border-r border-[#dfe0e2] pl-[5px] font-normal">标注</th>
                      <th />
                    </tr>
                  </thead>
                  <tbody>
                    {ranges.map(([c, t]) => (
                      <tr key={t} className="h-[33px]">
                        <td className="pt-px pl-[5px]">
                          <span className={"block h-[31px] w-[53px] border-2 border-[#6e6e6e] " + c} />
                        </td>
                        <td className="pl-[2px]">{t}</td>
                        <td className="pl-[2px]">{t}</td>
                        <td />
                      </tr>
                    ))}
                  </tbody>
                </table>
              </div>

              <div className="mt-[5px] flex h-12 items-start justify-between pr-[2px]">
                <label className="flex items-center gap-[7px] pt-[6px] leading-8">
                  <input
                    type="checkbox"
                    className="size-[22px] appearance-none border border-[#8e8f8f] bg-linear-to-br from-[#d4d6d8] to-[#f6f6f6] shadow-[inset_0_0_0_2px_#f4f4f4]"
                  />
                  使用要素值显示类范围(W)
                </label>
                <button type="button" className={"flex h-12 w-[182px] items-center rounded border-2 " + btnFace}>
                  <span className="flex-1 text-center">
                    高级(<u>D</u>)
                  </span>
                  <Arrow size={6} />
                </button>
              </div>
            </div>
          </div>
          <div className="mr-[3px] flex w-3 flex-col">
            <span className="mt-[2px] flex-1 bg-white" />
            <span className="h-[21px] border-l-2 border-[#898c95]" />
          </div>
        </div>

        <div className="mt-[22px] flex justify-end gap-[10px] pr-[9px] text-[27px]">
          <button
            type="button"
            className="h-[45px] w-[166px] rounded border-2 border-[#2f7fb5] bg-[linear-gradient(#eaf6fd,#ddf1fb_48%,#c2e3f6_50%,#b0d9f1)] shadow-[inset_0_0_0_2px_#3fd0f5]"
          >
            确定
          </button>
          <button type="button" className={"h-[45px] w-[166px] rounded border-2 " + btnFace}>
            取消
          </button>
          <button type="button" className={"h-[45px] w-[166px] rounded border-2 " + btnFace}>
            应用<span className="font-['Liberation_Mono',monospace] text-[22px]">(A)</span>
          </button>
        </div>
      </div>
    </div>
  );
}

/* ---------- analysis results ---------- */
function Results() {
  const pill =
    "flex h-[23px] w-[140px] items-center gap-1 overflow-visible whitespace-nowrap rounded-[4px] border-2 border-[#707070] bg-linear-to-b from-[#d2d2d2] to-[#eaeaea] pt-[2px] text-[27px] leading-6";
  return (
    <section className="flex flex-col">
      <header className="flex h-10 items-center justify-between bg-linear-to-r from-[#bfcddb] to-[#d7e4f2] pr-[5px] pl-[3px]">
        <h2 className="pt-[3px] text-[27px] leading-9 text-[#454f59]">准备</h2>
        <PinClose />
      </header>
      <div className="flex h-14 items-start justify-between">
        <div className="flex w-[669px] gap-[9px] pt-[2px]">
          <button type="button" className={pill}>
            <Svg size={19}>
              <circle cx="8" cy="8" r="7.500" fill="#d8382e" stroke="#8e1c16" />
              <path d="M5 5l6 6M11 5l-6 6" stroke="#fff" strokeWidth="2.400" />
            </Svg>
            <span>0 个错误</span>
          </button>
          <button type="button" className={pill}>
            <Svg size={19}>
              <path d="M8 1l7.500 14H.500z" fill="#f8c530" stroke="#a87b14" />
              <path d="M8 5.500v5M8 12v2" stroke="#222" strokeWidth="1.700" />
            </Svg>
            <span>0 个警告</span>
          </button>
          <button type="button" className={pill}>
            <Svg size={19}>
              <circle cx="8" cy="8" r="7.200" fill="#eef5ff" stroke="#3a78c8" strokeWidth="1.200" />
              <path d="M8 7v5.500M8 3.500v2" stroke="#2a64b8" strokeWidth="2" />
            </Svg>
            <span>0 条消息</span>
          </button>
        </div>
        <input
          type="search"
          aria-label="搜索分析结果"
          placeholder="搜索分析结果"
          className="mt-1 h-[42px] flex-1 border border-[#dfe6ee] border-t-[#a9adb5] bg-white px-1 pb-[5px] text-2xl leading-8 outline-none placeholder:text-[#6d6d6d]"
        />
        <button type="button" aria-label="清除搜索" className="mt-[7px] mr-[33px] ml-[9px]">
          <Svg size={18}>
            <circle cx="8" cy="8" r="7.300" fill="#ddd" stroke="#888" />
            <circle cx="9" cy="6.500" r="3.500" fill="#eee" stroke="#444" strokeWidth="1.400" />
            <path d="M11 9.500l2.500 4M2 8l5 6M7 8l-5 6" stroke="#222" strokeWidth="1.600" />
          </Svg>
        </button>
      </div>
      <table className="mr-[6px] table-fixed border-collapse border-2 border-[#a0a0a0] text-left text-[27px]">
        <colgroup>
          <col className="w-[44px]" />
          <col className="w-[182px]" />
          <col className="w-[182px]" />
          <col className="w-[182px]" />
          <col />
          <col className="w-[273px]" />
          <col className="w-[273px]" />
          <col className="w-[276px]" />
        </colgroup>
        <thead>
          <tr className="h-12 border-b-2 border-[#b5b5b5] leading-9">
            {["", "严重性", "状态", "编码", "描述", "名称", "类型", "数据框"].map((h, i) => (
              <th key={i} className="border-r border-[#a8a8a8] pl-[3px] font-normal">
                {h}
              </th>
            ))}
          </tr>
        </thead>
        <tbody>
          <tr className="h-[59px] bg-white">
            <td colSpan={8} className="pb-[6px] text-center leading-9">
              此视图中没有项目可显示。
            </td>
          </tr>
        </tbody>
      </table>
      <div className="flex h-[42px] border-b-2 border-white text-2xl leading-8">
        <span className="flex-1 border-l border-[#a0a0a0] pl-px">状态: 尚未分析</span>
        <span className="w-[324px] border-l-2 border-[#a0a0a0] pr-[6px] text-center">无项目</span>
        <label className="flex w-[777px] items-start justify-end gap-2 border-l-2 border-[#a0a0a0] pr-2">
          仅显示未解决的项目
          <input
            type="checkbox"
            className="mt-[6px] size-[22px] appearance-none border border-[#8e8f8f] bg-linear-to-br from-[#d4d6d8] to-[#f6f6f6] shadow-[inset_0_0_0_2px_#f4f4f4]"
          />
        </label>
      </div>
    </section>
  );
}

const menus = ["文件(F)", "编辑(E)", "视图(V)", "书签(B)", "插入(I)", "选择(S)", "地理处理(G)", "自定义(C)", "窗口(W)", "帮助(H)"];

export default function App() {
  return (
    <div className={"relative flex min-h-screen w-full flex-col overflow-hidden bg-[#f0f0f0] text-black " + UI}>
      {/* title bar */}
      <header className="relative flex h-12 items-center justify-between border-b-2 border-[#5c7a9e] bg-[linear-gradient(90deg,#2c62ab,#134da0_10%,#1450a4_30%,#1860b4_42%,#164f9c_60%,#1c5793_90%,#4b7aa8)]">
        <svg width="520" height="46" viewBox="0 0 520 46" className="absolute bottom-0 left-0" aria-hidden="true">
          <defs>
            <filter id="soft" x="-20%" y="-40%" width="140%" height="180%">
              <feGaussianBlur stdDeviation="3" />
            </filter>
          </defs>
          <g filter="url(#soft)">
            <path d="M30 10h210l20 36H30z" fill="#c7d7f0" opacity=".6" />
            <path d="M212 50V17h52l22 18 6 15zM380 50V17h56l18 18 6 15z" fill="#fafcff" />
          </g>
        </svg>
        <div className="relative flex items-center">
          <svg width="36" height="38" viewBox="0 0 36 38" aria-hidden="true">
            <circle cx="18" cy="19" r="17" fill="#1d5f8c" />
            <path d="M20 5c6 0 12 6 13 12l-5 8-4-8-6-4z" fill="#4fa850" />
            <path d="M6 24c4 2 8 6 9 11-5-1-9-5-9-11z" fill="#3f9a58" />
            <path d="M22 24l11 11" stroke="#b85a22" strokeWidth="5" strokeLinecap="round" />
            <circle cx="17" cy="17" r="9.500" fill="#cdeaf7" stroke="#e3e8ea" strokeWidth="2.500" />
          </svg>
          <h1 className="ml-[5px] pt-1 text-[28px] leading-9">无标题 - ArcMap</h1>
        </div>
        <div className="relative mr-[2px] flex h-[43px] self-start rounded-b-lg border-2 border-t-0 border-[#7d9dc4]">
          <button type="button" aria-label="最小化" className="flex w-[64px] items-center justify-center border-r-2 border-[#6d93bd]">
            <svg width="20" height="20" viewBox="0 0 20 20"><path d="M1 12h18v6H1z" fill="#f6f6f6" stroke="#555a70" /></svg>
          </button>
          <button type="button" aria-label="还原" className="flex w-[62px] items-center justify-center border-r-2 border-[#6d93bd]">
            <svg width="22" height="20" viewBox="0 0 22 20"><path d="M5 1h16v14H5z" fill="#eee" stroke="#555a70" /><path d="M1 4h17v15H1z" fill="#f6f6f6" stroke="#555a70" /><path d="M6 9h7v5H6z" fill="#1f5592" stroke="#555a70" /></svg>
          </button>
          <button type="button" aria-label="关闭" className="flex w-[106px] items-center justify-center pr-[2px]">
            <svg width="20" height="18" viewBox="0 0 22 20"><path d="M1 1h6l4 4.500L15 1h6l-7 9 7 9h-6l-4-4.500L7 19H1l7-9z" fill="#f6f6f6" stroke="#555a70" /></svg>
          </button>
        </div>
      </header>

      {/* toolbars and menu */}
      <div className="flex flex-col bg-linear-to-r from-[#f0f0f0] to-[#fcfcfc]">
        <div className="flex h-[41px] items-center pl-[792px]">
          <Bar className="h-[39px] w-[431px]">
            <Items list={["lZoomIn", "lZoomOut", "lPan", "lFull", "l11", "|", "lFixIn", "lFixOut", "|", "lBack", "lFwd"]} />
            <div className="flex h-9 w-[67px] items-center border-2 border-[#c0c0c0] bg-white pl-[2px]">
              <span className="flex h-7 w-[22px] justify-end overflow-hidden bg-[#3399ff]">
                <input
                  aria-label="布局缩放"
                  defaultValue="100%"
                  className="h-7 w-16 shrink-0 text-right font-['Liberation_Serif',serif] text-lg leading-7 text-[#4f6f96] outline-none"
                />
              </span>
              <span className="flex flex-1 justify-center"><Arrow size={13} color="#666" /></span>
            </div>
            <Sep />
            <Items list={["~draft", "focus", "swapPages", "ddp"]} />
          </Bar>
        </div>
        <div className="flex h-[39px] items-center pl-1">
          <Bar className="h-[38px] w-[693px]">
            <Items list={["newDoc", "open", "save", "print", "|", "cut", "copy", "paste", "del", "|", "undo", "redo", "|", "addData", "v", "|"]} />
            <div className="flex h-9 w-[165px] items-center border-2 border-[#dcdfe6] border-t-[#a0a0a8] bg-white">
              <input
                aria-label="地图比例"
                defaultValue="1:60,000,"
                className="w-[138px] pl-[3px] font-['Liberation_Serif',serif] text-[28px] leading-8 outline-none"
              />
              <Arrow size={13} />
            </div>
            <Items list={["|", "*editorTb", "|", "tocWin", "catalog", "search", "toolbox", "python", "|", "model"]} />
          </Bar>
          <Bar className="ml-1 h-[38px] w-[589px]">
            <Items
              list={["zoomIn", "zoomOut", "*hand", "globe", "|", "fixIn", "fixOut", "|", "back", "fwd", "|", "selFeat", "v", "clearSel", "|", "pointer", "|", "identify", "bolt", "popup", "|", "measure", "|", "find", "route", "xy", "|", "time", "|", "viewer"]}
            />
          </Bar>
        </div>
        <div className="flex h-[50px] items-center pl-[1058px]">
          <Bar className="h-[45px] w-[550px]">
            <button type="button" className="ml-1 flex items-center text-[27px] leading-9 whitespace-nowrap">
              编辑器(R)
              <span className="ml-[5px]"><Arrow size={7} /></span>
            </button>
            <span className="w-[5px]" />
            <Items
              list={["|", "edPtr", "edPtrA", "|", "line", "arc", "trace", "v", "point", "|", "vert", "reshape", "cutPoly", "split", "rotate", "|", "attrs", "sketch", "|", "create"]}
            />
          </Bar>
        </div>
        <nav className="flex h-[44px] items-center gap-[21px] pl-[13px] text-[27px] leading-9">
          {menus.map((m) => (
            <button key={m} type="button" className="whitespace-nowrap">
              {m}
            </button>
          ))}
        </nav>
      </div>

      <main className="flex flex-1">
        <Contents />
        <MapArea />
      </main>

      <div className="mt-[7px]">
        <Results />
      </div>

      <footer className="flex h-10 items-center justify-end pt-2 text-[27px] leading-8">
        <span className="w-[625px] border-l border-[#f8f8f8] whitespace-pre">-51.799  20.394 十进制度</span>
      </footer>
      <div className="flex h-[3px] items-stretch gap-[216px] border-t border-[#3d5a78] bg-[#b9cfe4] pl-[97px]">
        <span className="w-[102px] bg-[#2b3138]" />
        <span className="w-[102px] bg-[#2b3138]" />
      </div>

      <LayerProperties />
    </div>
  );
}
